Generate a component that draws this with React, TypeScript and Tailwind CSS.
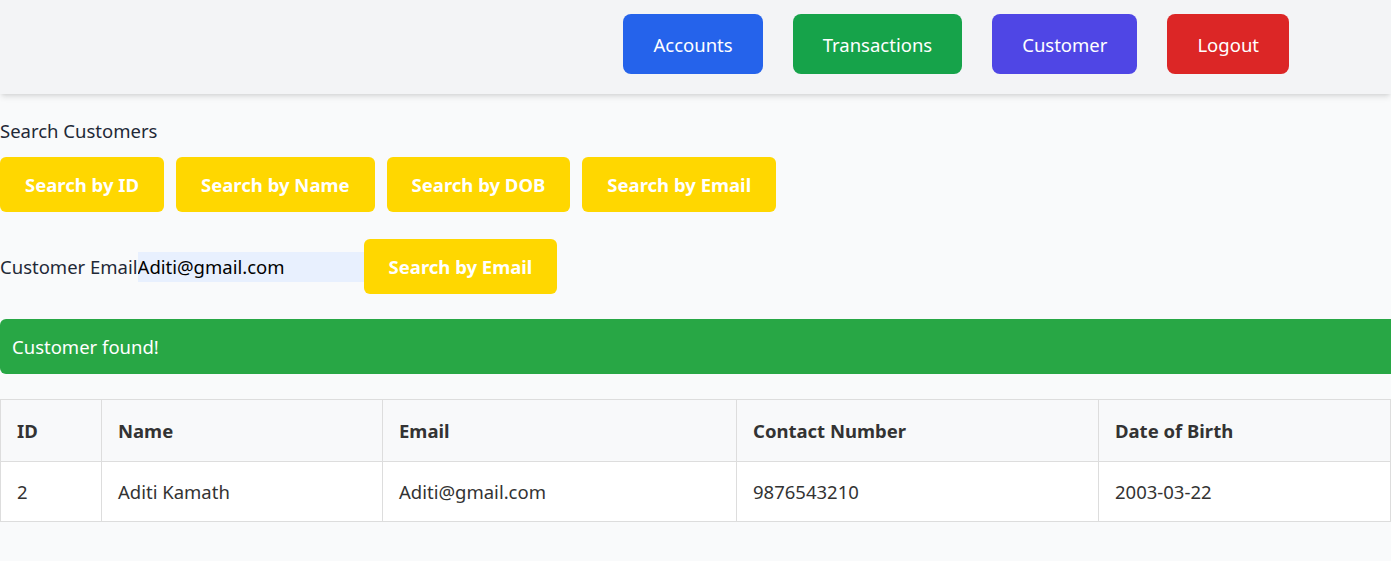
import { useState } from "react";

const navButtons = [
  { label: "Accounts", cls: "bg-[#2563eb]" },
  { label: "Transactions", cls: "bg-[#16a34a]" },
  { label: "Customer", cls: "bg-[#4f46e5]" },
  { label: "Logout", cls: "bg-[#dc2626]" },
];

const searchModes = ["Search by ID", "Search by Name", "Search by DOB", "Search by Email"];

const customer = {
  id: 2,
  name: "Aditi Kamath",
  email: "Aditi@gmail.com",
  contact: "9876543210",
  dob: "2003-03-22",
};

export default function App() {
  const [email, setEmail] = useState("Aditi@gmail.com");

  return (
    <div className="min-h-screen bg-[#f9fafb] text-[18.5px] text-[#1f2937] font-['Noto_Sans',sans-serif]">
      {/* top nav */}
      <nav className="h-[94px] bg-[#f3f4f6] shadow-md flex items-start pt-[14px] justify-end pr-[102px] gap-[30px]">
        {navButtons.map((b) => (
          <button
            key={b.label}
            className={`${b.cls} h-[60px] px-[30px] rounded-lg text-white leading-[27px]`}
          >
            {b.label}
          </button>
        ))}
      </nav>

      <div className="mt-[23px]">
        <p className="leading-[27px]">Search Customers</p>

        <div className="flex gap-[12px] mt-[13px]">
          {searchModes.map((m) => (
            <button
              key={m}
              className="bg-[#ffd700] text-white font-bold px-[25px] py-[14px] leading-[27px] rounded-md"
            >
              {m}
            </button>
          ))}
        </div>

        <div className="flex items-center mt-[27px]">
          <label className="leading-[27px] text-[#1f2937]">Customer Email</label>
          <input
            value={email}
            onChange={(e) => setEmail(e.target.value)}
            className="w-[226px] h-[30px] bg-[#e8f0fe] text-black outline-none leading-[27px]"
          />
          <button className="bg-[#ffd700] text-white font-bold px-[25px] py-[14px] leading-[27px] rounded-md">
            Search by Email
          </button>
        </div>

        <div className="mt-[25px] bg-[#28a745] text-white h-[55px] flex items-center pl-[12px] rounded-l-md">
          Customer found!
        </div>

        <table className="mt-[25px] w-full border-collapse text-[#333]">
          <thead>
            <tr className="bg-[#f8f9fa]">
              <th className="w-[101px] border border-[#dddddd] text-left font-bold px-[16px] py-[17px] leading-[27px]">ID</th>
              <th className="w-[281px] border border-[#dddddd] text-left font-bold px-[16px] py-[17px] leading-[27px]">Name</th>
              <th className="w-[354px] border border-[#dddddd] text-left font-bold px-[16px] py-[17px] leading-[27px]">Email</th>
              <th className="w-[362px] border border-[#dddddd] text-left font-bold px-[16px] py-[17px] leading-[27px]">Contact Number</th>
              <th className="border border-[#dddddd] text-left font-bold px-[16px] py-[17px] leading-[27px]">Date of Birth</th>
            </tr>
          </thead>
          <tbody>
            <tr className="bg-white">
              <td className="border border-[#dddddd] px-[16px] py-[16px] leading-[27px]">{customer.id}</td>
              <td className="border border-[#dddddd] px-[16px] py-[16px] leading-[27px]">{customer.name}</td>
              <td className="border border-[#dddddd] px-[16px] py-[16px] leading-[27px]">{customer.email}</td>
              <td className="border border-[#dddddd] px-[16px] py-[16px] leading-[27px]">{customer.contact}</td>
              <td className="border border-[#dddddd] px-[16px] py-[16px] leading-[27px]">{customer.dob}</td>
            </tr>
          </tbody>
        </table>
      </div>
    </div>
  );
}
